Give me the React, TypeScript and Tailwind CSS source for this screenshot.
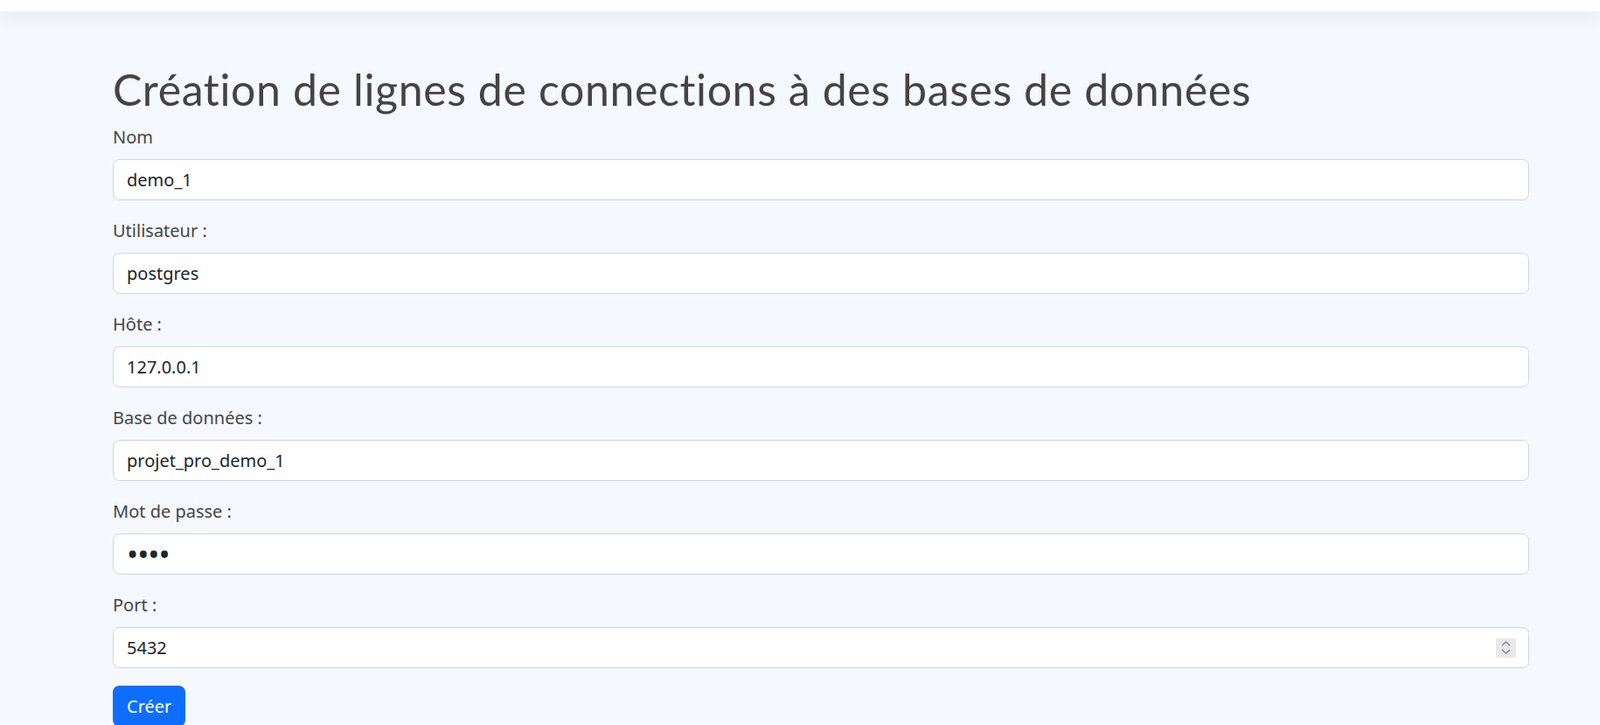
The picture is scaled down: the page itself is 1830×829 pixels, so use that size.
import { useState } from "react";

const fields = [
  { label: "Nom", value: "demo_1", type: "text" },
  { label: "Utilisateur :", value: "postgres", type: "text" },
  { label: "Hôte :", value: "127.0.0.1", type: "text" },
  { label: "Base de données :", value: "projet_pro_demo_1", type: "text" },
];

const inputCls =
  "block w-full h-[47px] px-[15px] bg-white border border-[#d0d4dc] rounded-[7.5px] text-[20px] text-[#212529] outline-none";

function Spinner() {
  return (
    <div className="absolute right-[15px] top-1/2 -translate-y-1/2 w-[23px] h-[22px] bg-[#e9e9ed] flex flex-col items-center justify-center gap-[3px]">
      <svg width="11" height="6" viewBox="0 0 11 6" fill="none">
        <path d="M1 5l4.5-4 4.5 4" stroke="#8b8b96" strokeWidth="1.6" />
      </svg>
      <svg width="11" height="6" viewBox="0 0 11 6" fill="none">
        <path d="M1 1l4.5 4 4.5-4" stroke="#8b8b96" strokeWidth="1.6" />
      </svg>
    </div>
  );
}

export default function App() {
  const [port, setPort] = useState("5432");

  return (
    <div className="min-h-[829px] bg-[#f5f8fe] font-['Noto_Sans',sans-serif] overflow-hidden">
      {/* navbar, scrolled mostly out of view */}
      <div className="h-[13px] bg-white shadow-[0_4px_22px_rgba(60,80,130,0.13)] relative" />

      <div className="ml-[129px] w-[1620px] pt-[59px]">
        <h1 className="font-['Lato',sans-serif] text-[50px] leading-[60px] tracking-[0.62px] [font-variant-ligatures:none] text-[#444444] mb-[10px]">
          Création de lignes de connections à des bases de données
        </h1>

        <form onSubmit={(e) => e.preventDefault()}>
          {fields.map((f) => (
            <div key={f.label} className="mb-[20px]">
              <label className="block text-[20px] leading-[30px] text-[#454545] mb-[10px]">
                {f.label}
              </label>
              <input type={f.type} defaultValue={f.value} className={inputCls} />
            </div>
          ))}

          <div className="mb-[20px]">
            <label className="block text-[20px] leading-[30px] text-[#454545] mb-[10px]">
              Mot de passe :
            </label>
            <input
              type="password"
              defaultValue="1234"
              className="block w-full h-[47px] px-[15px] bg-white border border-[#d0d4dc] rounded-[7.5px] text-[35px] tracking-[-1px] text-[#212529] outline-none"
            />
          </div>

          <div className="mb-[20px]">
            <label className="block text-[20px] leading-[30px] text-[#454545] mb-[10px]">
              Port :
            </label>
            <div className="relative">
              <input
                type="text"
                value={port}
                onChange={(e) => setPort(e.target.value)}
                className={inputCls}
              />
              <Spinner />
            </div>
          </div>

          <button
            type="submit"
            className="h-[47px] px-[16px] bg-[#0d6efd] text-white text-[20px] rounded-[7.5px]"
          >
            Créer
          </button>
        </form>
      </div>
    </div>
  );
}
